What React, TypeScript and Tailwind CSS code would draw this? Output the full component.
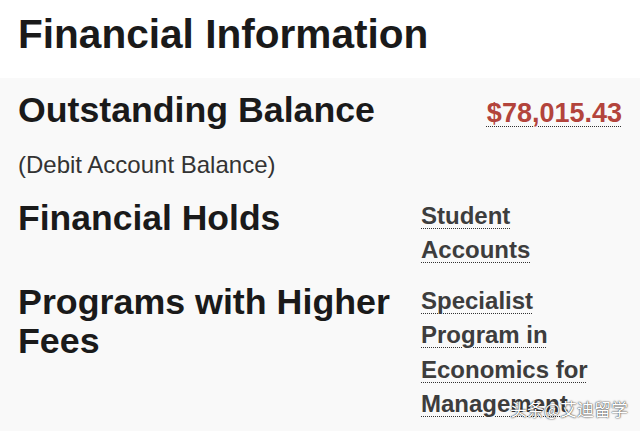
export default function App() {
  const link =
    "underline decoration-dotted decoration-1 underline-offset-4 decoration-[#333]";

  return (
    <div className="relative h-[431px] w-full overflow-hidden bg-[#f9f9f9] font-['Liberation_Sans',Arial,sans-serif]">
      {/* Header */}
      <div className="h-[78px] bg-white px-[18px] pt-[10px]">
        <h1 className="text-[40.6px] font-bold leading-[48px] text-[#1a1a1a]">Financial Information</h1>
      </div>

      {/* Body */}
      <div className="px-[18px] pt-[13px]">
        <div className="flex items-baseline justify-between">
          <h2 className="text-[35.7px] font-bold leading-[39px] text-[#1a1a1a]">Outstanding Balance</h2>
          <span className={`text-[27px] font-bold leading-[32px] text-[#b3443c] ${link}`}>$78,015.43</span>
        </div>

        <p className="mt-[19px] text-[24px] leading-[32px] text-[#333]">(Debit Account Balance)</p>

        <div className="mt-[18px] grid grid-cols-[403px_1fr] items-start">
          <h2 className="text-[35.5px] font-bold leading-[39px] text-[#1a1a1a]">Financial Holds</h2>
          <span className={`text-[24px] font-bold leading-[34px] text-[#3d3d3d] ${link}`}>
            Student
            <br />
            Accounts
          </span>
        </div>

        <div className="mt-[16px] grid grid-cols-[403px_1fr] items-start">
          <h2 className="pr-4 text-[35.8px] font-bold leading-[39px] text-[#1a1a1a]">Programs with Higher Fees</h2>
          <span className={`mt-[1px] text-[24px] font-bold leading-[34.3px] text-[#3d3d3d] ${link}`}>
            Specialist
            <br />
            Program in
            <br />
            Economics for
            <br />
            Management
          </span>
        </div>
      </div>

      {/* Watermark */}
      <div className="absolute right-[12px] top-[398px] text-[17px] leading-[22px] text-white [text-shadow:0_0_2px_rgba(0,0,0,0.7),0_0_1px_rgba(0,0,0,0.7)] font-['Noto_Sans_CJK_SC',sans-serif]">
        头条@艾迪留学
      </div>
    </div>
  );
}
